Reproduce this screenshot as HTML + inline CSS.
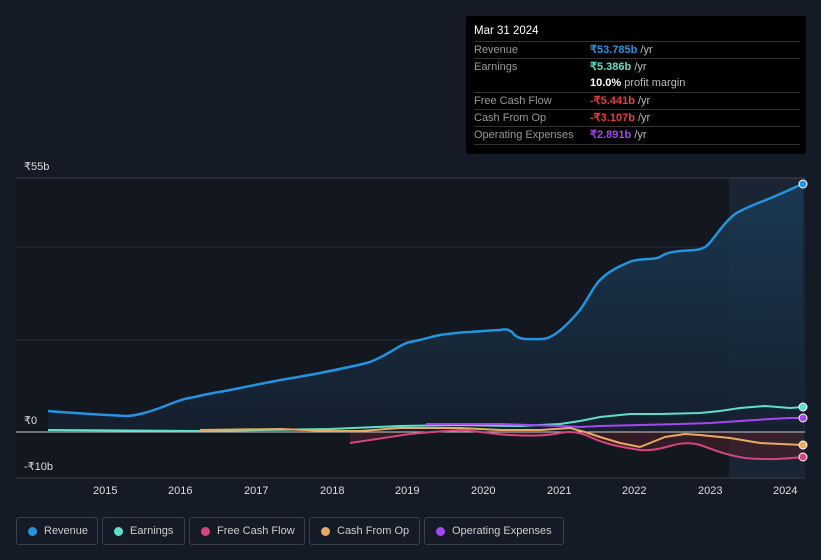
<!DOCTYPE html>
<html><head><meta charset="utf-8"><style>
body{margin:0;width:821px;height:560px;background:#151b26;font-family:"Liberation Sans",sans-serif;overflow:hidden;position:relative}
.tip{position:absolute;left:466px;top:16px;width:340px;height:138px;background:#000;border-radius:2px;color:#fff;font-size:11px}
.tip .h{position:absolute;left:8px;top:9px;font-size:11.5px}
.row{position:absolute;left:8px;width:326px;border-top:1px solid #333;height:17px;line-height:17px}
.row span.l{color:#999}
.row span.v{position:absolute;left:116px;font-weight:bold}
.row span.v i{font-style:normal;font-weight:normal;color:#bbb}
.leg{position:absolute;top:517px;height:28px;border:1px solid #3a404a;border-radius:3px;color:#ccc;font-size:11px;line-height:27px;box-sizing:border-box;padding-left:27px}
.leg b{position:absolute;left:11px;top:9px;width:9px;height:9px;border-radius:50%}
.ax{position:absolute;color:#ddd;font-size:11px}
</style></head><body>
<svg width="821" height="560" style="position:absolute;left:0;top:0">
<defs><linearGradient id="g" x1="0" y1="0" x2="0" y2="1"><stop offset="0" stop-color="#1b3a55"/><stop offset="1" stop-color="#15202e"/></linearGradient></defs>
<rect x="16" y="178" width="789" height="300" fill="#121720"/>
<rect x="729" y="178" width="76" height="300" fill="#1a2533"/>
<line x1="16" y1="178" x2="805" y2="178" stroke="#3a404a"/>
<line x1="16" y1="247" x2="805" y2="247" stroke="#262c36"/>
<line x1="16" y1="340" x2="805" y2="340" stroke="#262c36"/>
<line x1="16" y1="478" x2="805" y2="478" stroke="#3a404a"/>
<path d="M48,411 C70,413 90,414 125,416 C135,416 145,413 160,408 C175,402 185,398 195,397 C210,393 220,392 230,390 C250,386 260,384 270,382 C290,378 305,376 320,373 C345,368 360,365 370,362 C380,358 385,355 390,352 C400,346 405,343 410,342 C425,339 430,337 440,335 C455,333 465,332 470,332 C485,331 495,330 500,330 C505,329 508,329 512,332 C515,336 518,338 525,339 C535,339 545,340 550,337 C560,332 570,322 580,310 C590,296 593,287 600,280 C610,270 620,266 632,261 C645,258 655,260 660,257 C668,251 680,251 695,250 C705,249 708,245 712,240 C720,230 725,222 735,214 C750,205 765,201 780,194 C790,190 797,186 803,184 L803,432 L48,432 Z" fill="url(#g)" opacity="0.9"/>
<path d="M350,443 L380,438 L410,434 L440,431 L470,430 L500,434 L530,435 L560,433 L580,434 L600,441 L630,448 L655,450 L670,446 L690,443 L710,447 L730,454 L760,458 L803,457 L803,432 L350,432Z" fill="#4a1f2a" opacity="0.6"/>
<line x1="16" y1="432" x2="805" y2="432" stroke="#ccc" stroke-width="1"/>
<path d="M48,430 L200,431 L330,429 L400,426 L460,425 L520,426 L560,424 L580,421 L600,417 L630,414 L660,414 L700,413 L720,411 L740,408 L765,406 L790,408 L803,407" fill="none" stroke="#5ee0c8" stroke-width="2"/>
<path d="M426,424 L470,424 L500,424 L530,425 L560,426 L580,427 L600,426 L640,425 L680,424 L710,423 L740,421 L770,419 L790,418 L803,418" fill="none" stroke="#a447f0" stroke-width="2"/>
<path d="M350,443 C370,440 390,437 410,434 C430,432 445,431 460,430 C480,431 490,434 510,435 C530,436 545,436 560,433 C570,431 580,432 590,437 C605,444 620,447 640,450 C650,451 660,449 670,446 C680,443 690,442 700,445 C715,450 725,455 745,458 C765,460 785,459 803,457" fill="none" stroke="#d4457f" stroke-width="2"/>
<path d="M200,430 L280,429 L330,431 L360,431 L400,428 L460,428 L500,430 L540,430 L570,428 L585,432 L600,437 L620,443 L640,447 L650,443 L665,437 L685,434 L700,435 L730,438 L760,443 L803,445" fill="none" stroke="#e8aa60" stroke-width="2"/>
<path d="M48,411 C70,413 90,414 125,416 C135,416 145,413 160,408 C175,402 185,398 195,397 C210,393 220,392 230,390 C250,386 260,384 270,382 C290,378 305,376 320,373 C345,368 360,365 370,362 C380,358 385,355 390,352 C400,346 405,343 410,342 C425,339 430,337 440,335 C455,333 465,332 470,332 C485,331 495,330 500,330 C505,329 508,329 512,332 C515,336 518,338 525,339 C535,339 545,340 550,337 C560,332 570,322 580,310 C590,296 593,287 600,280 C610,270 620,266 632,261 C645,258 655,260 660,257 C668,251 680,251 695,250 C705,249 708,245 712,240 C720,230 725,222 735,214 C750,205 765,201 780,194 C790,190 797,186 803,184" fill="none" stroke="#2394e0" stroke-width="2.5"/>
<circle cx="803" cy="184" r="4" fill="#2394e0" stroke="#fff" stroke-width="1"/>
<circle cx="803" cy="407" r="4" fill="#5ee0c8" stroke="#fff" stroke-width="1"/>
<circle cx="803" cy="418" r="4" fill="#a447f0" stroke="#fff" stroke-width="1"/>
<circle cx="803" cy="445" r="4" fill="#e8aa60" stroke="#fff" stroke-width="1"/>
<circle cx="803" cy="457" r="4" fill="#d4457f" stroke="#fff" stroke-width="1"/>
</svg>
<div class="ax" style="left:24px;top:160px">₹55b</div>
<div class="ax" style="left:24px;top:414px">₹0</div>
<div class="ax" style="left:24px;top:460px">-₹10b</div>
<div class="ax" style="left:93px;top:485px">2015</div>
<div class="ax" style="left:168px;top:485px">2016</div>
<div class="ax" style="left:244px;top:485px">2017</div>
<div class="ax" style="left:320px;top:485px">2018</div>
<div class="ax" style="left:395px;top:485px">2019</div>
<div class="ax" style="left:471px;top:485px">2020</div>
<div class="ax" style="left:547px;top:485px">2021</div>
<div class="ax" style="left:622px;top:485px">2022</div>
<div class="ax" style="left:698px;top:485px">2023</div>
<div class="ax" style="left:773px;top:485px">2024</div>
<div class="tip"><div class="h">Mar 31 2024</div>
<div class="row" style="top:25px"><span class="l">Revenue</span><span class="v" style="color:#2394e0">₹53.785b <i>/yr</i></span></div>
<div class="row" style="top:42px"><span class="l">Earnings</span><span class="v" style="color:#5ee0c8">₹5.386b <i>/yr</i></span></div>
<div class="row" style="top:59px;border-top:none"><span class="v" style="color:#fff">10.0% <i>profit margin</i></span></div>
<div class="row" style="top:76px"><span class="l">Free Cash Flow</span><span class="v" style="color:#f03a3a">-₹5.441b <i>/yr</i></span></div>
<div class="row" style="top:93px"><span class="l">Cash From Op</span><span class="v" style="color:#f03a3a">-₹3.107b <i>/yr</i></span></div>
<div class="row" style="top:110px;border-bottom:1px solid #333"><span class="l">Operating Expenses</span><span class="v" style="color:#a447f0">₹2.891b <i>/yr</i></span></div>
</div>
<div class="leg" style="left:16px;width:82px"><b style="background:#2394e0"></b>Revenue</div>
<div class="leg" style="left:102px;width:83px"><b style="background:#5ee0c8"></b>Earnings</div>
<div class="leg" style="left:189px;width:116px"><b style="background:#d4457f"></b>Free Cash Flow</div>
<div class="leg" style="left:309px;width:111px"><b style="background:#e8aa60"></b>Cash From Op</div>
<div class="leg" style="left:424px;width:140px"><b style="background:#a447f0"></b>Operating Expenses</div>
</body></html>
